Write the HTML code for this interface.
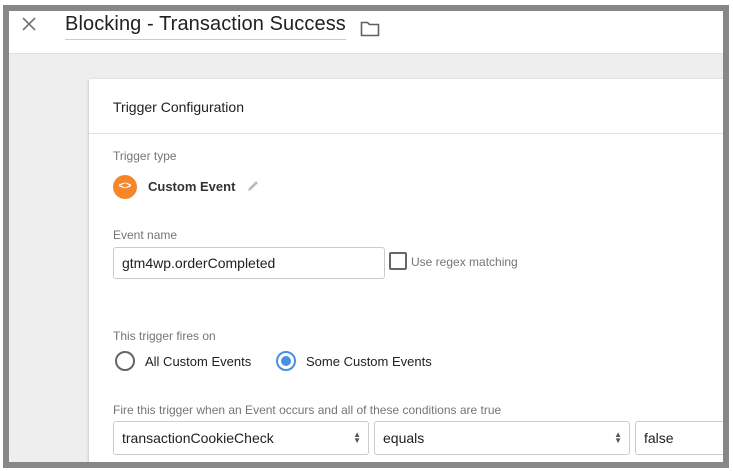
<!DOCTYPE html>
<html><head><style>
*{margin:0;padding:0;box-sizing:border-box}
body{width:733px;height:471px;background:#fff;position:relative;overflow:hidden;font-family:"Liberation Sans",Arial,sans-serif;color:#212121}
.frame{position:absolute;left:3px;top:5px;width:726px;height:463px;border:6px solid #878787;overflow:hidden;background:#eeeeee}
.hdr{position:absolute;left:0;top:0;right:0;height:43px;background:#fff;border-bottom:1px solid #e0e0e0}
.card{position:absolute;left:80px;top:68px;width:700px;height:400px;background:#fff;box-shadow:0 1px 3px rgba(0,0,0,.25)}
.abs{position:absolute;white-space:nowrap}
.lbl{font-size:12px;color:#757575}
.sel{position:absolute;height:34px;border:1px solid #ccc;border-radius:3px;font-size:14px;padding:8px 8px;color:#212121}
.arr{position:absolute;right:7px;top:10px;font-size:8px;line-height:6px;color:#555}
</style></head><body>
<div class="frame">
 <div class="hdr">
  <svg class="abs" style="left:12px;top:5px" width="16" height="16" viewBox="0 0 16 16"><path d="M2 2L14 14M14 2L2 14" stroke="#757575" stroke-width="1.6"/></svg>
  <div class="abs" style="left:56px;top:2px;font-size:20px;color:#212121;letter-spacing:0.1px">Blocking - Transaction Success</div>
  <div class="abs" style="left:56px;top:28px;width:281px;border-bottom:1px solid #ccc"></div>
  <svg class="abs" style="left:351px;top:10px" width="20" height="16" viewBox="0 0 20 16"><path d="M1.5 1.5h6l2 2h9v11h-17z" fill="none" stroke="#616161" stroke-width="1.6"/></svg>
 </div>
 <div class="card">
  <div class="abs" style="left:24px;top:20px;font-size:14px">Trigger Configuration</div>
  <div class="abs" style="left:0;top:54px;width:700px;border-top:1px solid #e0e0e0"></div>
  <div class="abs lbl" style="left:24px;top:70px">Trigger type</div>
  <div class="abs" style="left:24px;top:96px;width:24px;height:24px;border-radius:50%;background:#f5862a;color:#fff;font-size:11px;text-align:center;line-height:23px;font-weight:bold">&lt;&gt;</div>
  <div class="abs" style="left:59px;top:100px;font-size:13px;font-weight:bold;color:#333">Custom Event</div>
  <svg class="abs" style="left:157px;top:100px" width="14" height="14" viewBox="0 0 14 14"><path d="M2 12l1-3 7-7 2 2-7 7z" fill="#bdbdbd"/></svg>
  <div class="abs lbl" style="left:24px;top:149px">Event name</div>
  <div class="sel" style="left:24px;top:168px;width:272px;height:32px;padding:7px 8px">gtm4wp.orderCompleted</div>
  <div class="abs" style="left:300px;top:173px;width:18px;height:18px;border:2px solid #666;border-radius:2px"></div>
  <div class="abs" style="left:322px;top:176px;font-size:12px;color:#757575">Use regex matching</div>
  <div class="abs lbl" style="left:24px;top:250px">This trigger fires on</div>
  <div class="abs" style="left:26px;top:272px;width:20px;height:20px;border:2px solid #666;border-radius:50%"></div>
  <div class="abs" style="left:56px;top:275px;font-size:13px">All Custom Events</div>
  <div class="abs" style="left:187px;top:272px;width:20px;height:20px;border:2px solid #4a90e2;border-radius:50%"><div style="margin:3px;width:10px;height:10px;border-radius:50%;background:#4a90e2"></div></div>
  <div class="abs" style="left:217px;top:275px;font-size:13px">Some Custom Events</div>
  <div class="abs lbl" style="left:24px;top:324px">Fire this trigger when an Event occurs and all of these conditions are true</div>
  <div class="sel" style="left:24px;top:342px;width:256px">transactionCookieCheck<div class="arr">▲<br>▼</div></div>
  <div class="sel" style="left:285px;top:342px;width:256px">equals<div class="arr">▲<br>▼</div></div>
  <div class="sel" style="left:546px;top:342px;width:200px">false</div>
 </div>
</div>
</body></html>
